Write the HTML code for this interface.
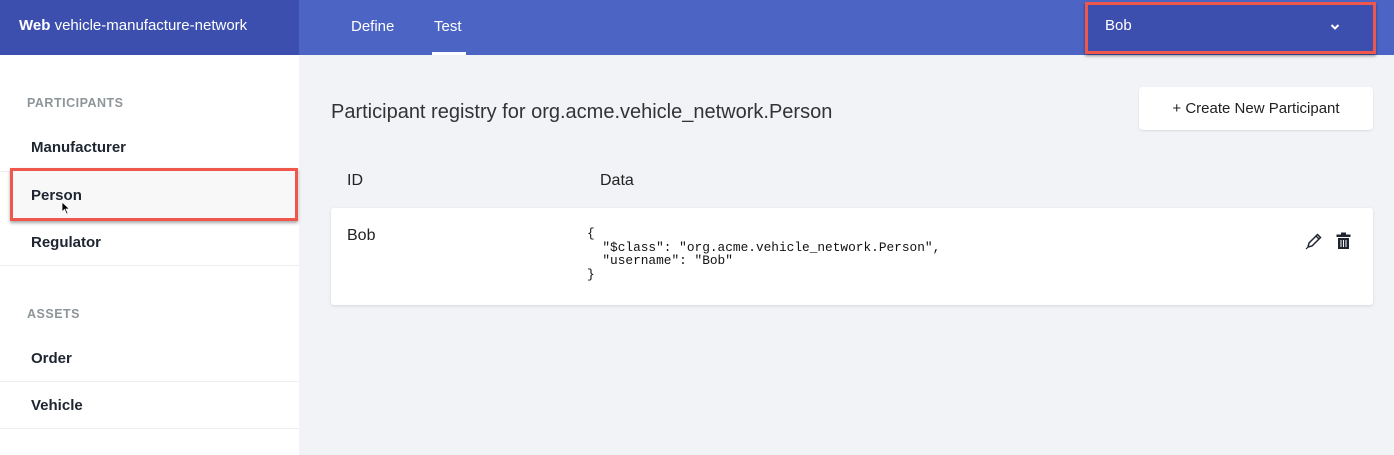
<!DOCTYPE html>
<html><head><style>
*{margin:0;padding:0;box-sizing:border-box}
body{width:1394px;height:455px;overflow:hidden;background:#f2f3f7;font-family:"Liberation Sans",sans-serif;position:relative}
.hdr{position:absolute;left:0;top:0;width:1394px;height:55px;background:#4c64c4}
.brand{position:absolute;left:0;top:0;width:299px;height:55px;background:#3d4fae;color:#fff;font-size:15px;padding:17px 0 0 19px}
.tab{position:absolute;top:18px;color:#fff;font-size:15px}
.ul{position:absolute;left:432px;top:52px;width:34px;height:3px;background:#fff}
.sel{position:absolute;left:1085px;top:2px;width:291px;height:52px;border:3px solid #f0574c;background:#3d4fae;color:#fff;font-size:15px;padding:12px 0 0 17px;box-shadow:0 2px 3px rgba(0,0,0,.4)}
.side{position:absolute;left:0;top:55px;width:299px;height:400px;background:#fff}
.sec{position:absolute;left:27px;font-size:12.5px;font-weight:bold;color:#8e9599;letter-spacing:.5px}
.it{position:absolute;left:31px;font-size:15px;color:#1e2530;font-weight:bold}
.line{position:absolute;left:0;width:299px;height:1px;background:#eceef0}
.pbox{position:absolute;left:10px;top:168px;width:288px;height:53px;border:3px solid #f0574c;background:#f8f8f8;box-shadow:0 2px 3px rgba(0,0,0,.35)}
.title{position:absolute;left:331px;top:101px;font-size:20px;color:#333;font-weight:300}
.btn{position:absolute;left:1139px;top:87px;width:234px;height:43px;background:#fff;border-radius:4px;box-shadow:0 1px 2px rgba(0,0,0,.1);font-size:15px;color:#222;text-align:center;padding-top:13px}
.col{position:absolute;top:172px;font-size:16px;color:#222}
.card{position:absolute;left:331px;top:208px;width:1042px;height:97px;background:#fff;border-radius:3px;box-shadow:0 1px 3px rgba(0,0,0,.12)}
pre{position:absolute;left:256px;top:19px;font-family:"Liberation Mono",monospace;font-size:12.8px;line-height:13.5px;color:#111}
</style></head><body>
<div class="hdr"></div>
<div class="brand"><b>Web</b> vehicle-manufacture-network</div>
<div class="tab" style="left:351px">Define</div>
<div class="tab" style="left:434px">Test</div>
<div class="ul"></div>
<div class="sel">Bob<svg style="position:absolute;left:242px;top:18px" width="10" height="8" viewBox="0 0 10 8"><path d="M1.5 2 L5 5.5 L8.5 2" stroke="#fff" stroke-width="2" fill="none"/></svg></div>
<div class="side">
<div class="sec" style="top:41px">PARTICIPANTS</div>
<div class="it" style="top:84px">Manufacturer</div>
<div class="line" style="top:116px"></div>
<div class="line" style="top:210px"></div>
<div class="it" style="top:179px">Regulator</div>
<div class="sec" style="top:252px">ASSETS</div>
<div class="it" style="top:295px">Order</div>
<div class="line" style="top:326px"></div>
<div class="it" style="top:342px">Vehicle</div>
<div class="line" style="top:373px"></div>
</div>
<div class="pbox"><div class="it" style="left:18px;top:16px">Person</div>
<svg style="position:absolute;left:48px;top:30px" width="10" height="14" viewBox="0 0 10 14"><path d="M1 1 L1 11 L3.5 8.5 L5.5 13 L7 12.3 L5 8 L8.5 8 Z" fill="#000" stroke="#fff" stroke-width=".8"/></svg></div>
<div class="title">Participant registry for org.acme.vehicle_network.Person</div>
<div class="btn">+ Create New Participant</div>
<div class="col" style="left:347px">ID</div>
<div class="col" style="left:600px">Data</div>
<div class="card">
<div style="position:absolute;left:16px;top:19px;font-size:16px;color:#222">Bob</div>
<pre>{
  "$class": "org.acme.vehicle_network.Person",
  "username": "Bob"
}</pre>
<svg style="position:absolute;left:974px;top:24px" width="18" height="18" viewBox="0 0 18 18"><path d="M3 15 L4 11 L12.5 2.5 L15.5 5.5 L7 14 Z M11 4 L14 7" stroke="#1e2530" stroke-width="1.5" fill="none"/><path d="M1 17 L3 15" stroke="#1e2530" stroke-width="1.2"/></svg>
<svg style="position:absolute;left:1005px;top:24px" width="15" height="18" viewBox="0 0 15 18"><rect x="5" y="0.5" width="5" height="2" fill="#1e2530"/><rect x="0.5" y="2.5" width="14" height="2.5" fill="#1e2530"/><path d="M2 6 H13 V17 H2 Z" fill="#1e2530"/><path d="M5 8 V15 M7.5 8 V15 M10 8 V15" stroke="#fff" stroke-width="1"/></svg>
</div>
</body></html>
